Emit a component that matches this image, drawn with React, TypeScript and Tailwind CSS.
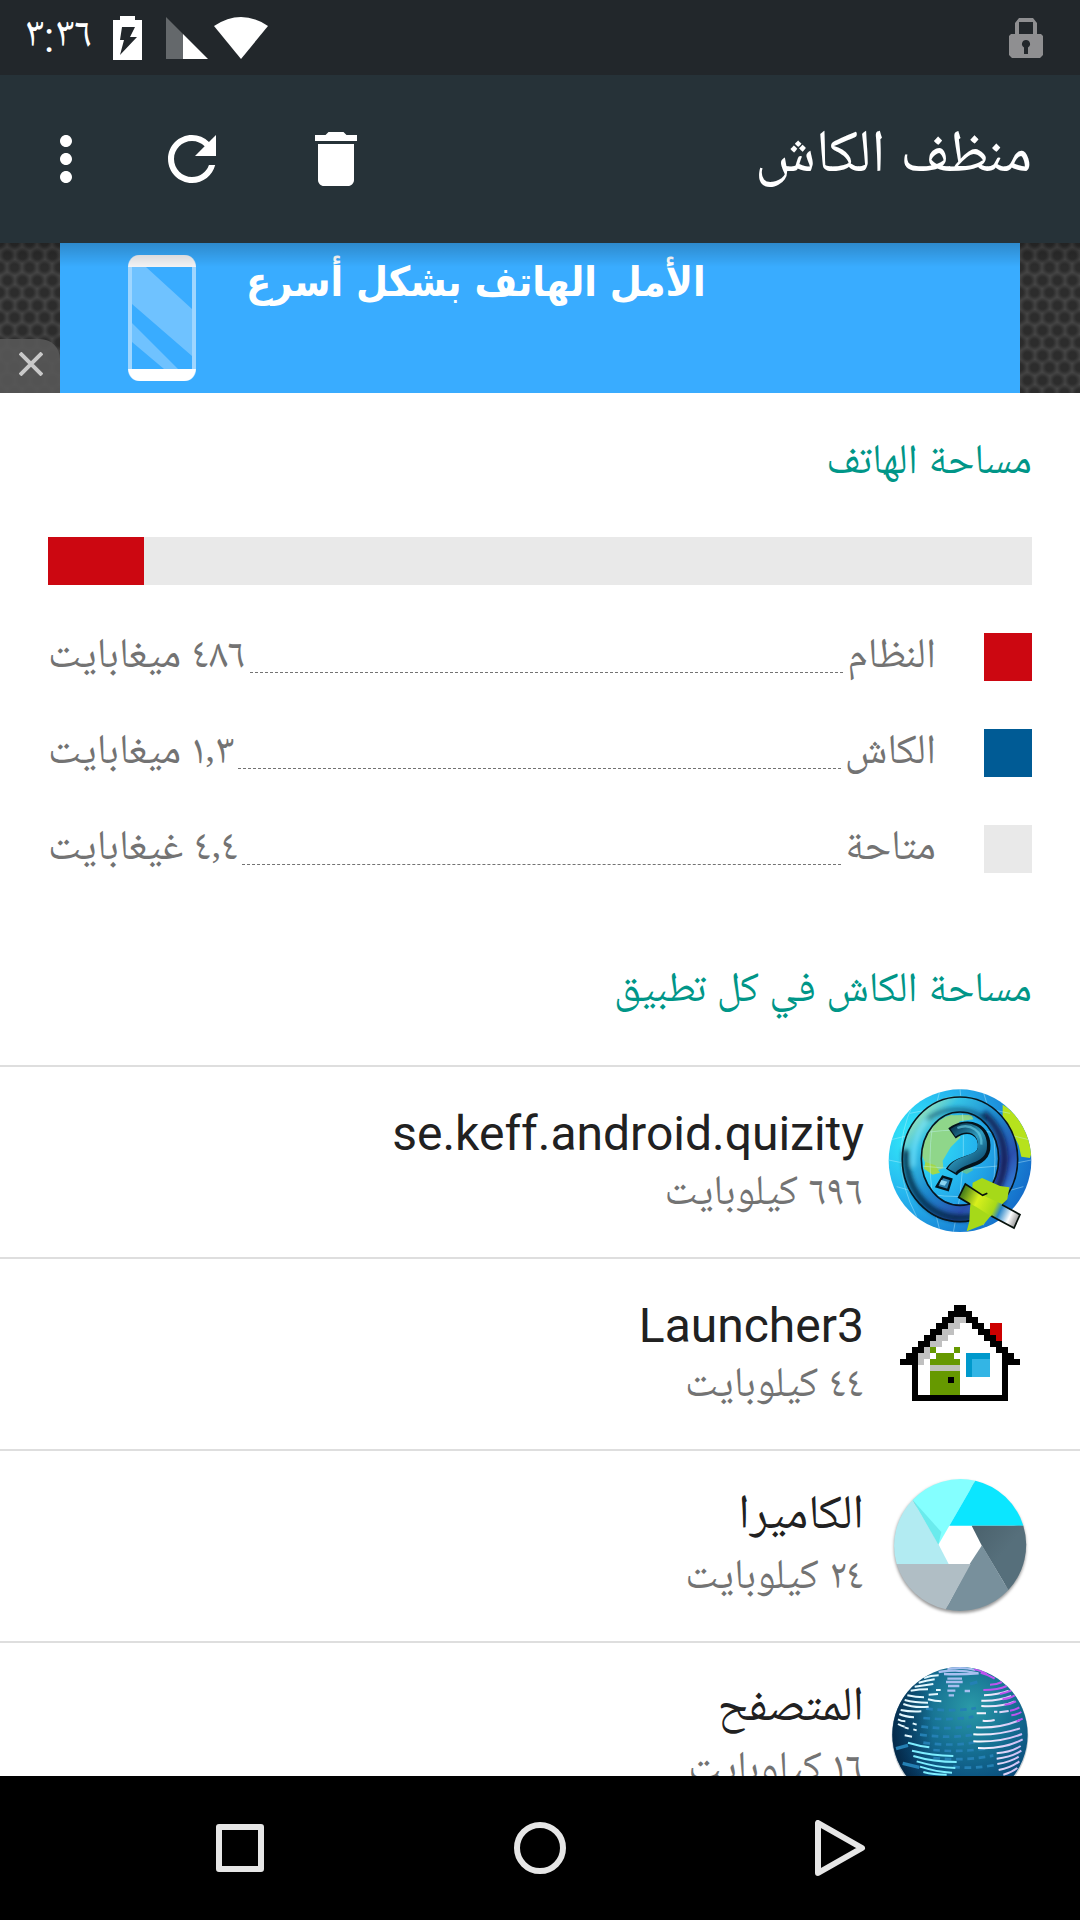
import type { ReactNode } from 'react';
import { MdDelete, MdMoreVert, MdRefresh } from 'react-icons/md';

const usage = [
  { label: 'النظام', value: '٤٨٦ ميغابايت', color: 'bg-[#cc0711]' },
  { label: 'الكاش', value: '١٫٣ ميغابايت', color: 'bg-[#005b95]' },
  { label: 'متاحة', value: '٤٫٤ غيغابايت', color: 'bg-[#e9e9e9]' },
];

const QuizityIcon = () => (
  <svg viewBox="54 57 432 432" className="size-full">
    <defs>
      <radialGradient id="qz-sea" cx="0.2" cy="0.35" r="0.9">
        <stop offset="0" stopColor="#35f0fb" />
        <stop offset="0.45" stopColor="#25b4ee" />
        <stop offset="1" stopColor="#1263c4" />
      </radialGradient>
      <linearGradient id="qz-ring" x1="0" y1="0" x2="1" y2="1">
        <stop offset="0" stopColor="#c4f0a8" />
        <stop offset="0.22" stopColor="#35c3e6" />
        <stop offset="0.5" stopColor="#1c86cc" />
        <stop offset="0.75" stopColor="#2a4fae" />
        <stop offset="1" stopColor="#3a9cf0" />
      </linearGradient>
      <linearGradient id="qz-mark" x1="0" y1="0" x2="0.6" y2="1">
        <stop offset="0" stopColor="#0b3b55" />
        <stop offset="0.5" stopColor="#2f9cc0" />
        <stop offset="1" stopColor="#0f4f74" />
      </linearGradient>
      <linearGradient id="qz-tail" gradientUnits="userSpaceOnUse" x1="266" y1="370" x2="445" y2="455">
        <stop offset="0" stopColor="#2d6a1c" />
        <stop offset="0.3" stopColor="#d8f01c" />
        <stop offset="0.58" stopColor="#a6d919" />
        <stop offset="0.68" stopColor="#2a86c8" />
        <stop offset="0.85" stopColor="#ffffff" />
        <stop offset="1" stopColor="#8a8a8a" />
      </linearGradient>
      <filter id="qz-soft" x="-20%" y="-20%" width="140%" height="140%">
        <feGaussianBlur stdDeviation="7" />
      </filter>
      <clipPath id="qz-clip"><circle cx="270" cy="272" r="214" /></clipPath>
    </defs>
    <circle cx="270" cy="272" r="214" fill="url(#qz-sea)" />
    <g clipPath="url(#qz-clip)">
      <path d="M398 104c40 20 78 82 88 140l-6 20-26-4-8-34-20-40-28-40z" fill="#b6e21c" />
      <path d="M150 160l50-30 50 6 54-2 6 14-40 6-20 26 22 22-30 30-24 40 2 22-24 10-30-24-24-56z" fill="#8fd68a" />
      <path d="M166 276l30 10 14 22-22 6-26-18z" fill="#a2d84a" />
      <path d="M262 300l36-14 12 14-20 12z" fill="#5cc0a0" />
      <g fill="none" stroke="#c5f4ff" strokeOpacity="0.4" strokeWidth="3">
        <path d="M60 210q210-60 420 0M56 270q210 50 428 0M80 350q190 60 380 0M120 130q150-40 300 0" />
        <path d="M210 60q-60 210 0 424M270 57q30 210-20 430M340 66q70 200 0 400M130 100q-80 170 10 340" />
      </g>
    </g>
    <ellipse cx="270" cy="267" rx="144" ry="163" fill="none" stroke="url(#qz-ring)" strokeWidth="54" />
    <g fill="none" filter="url(#qz-soft)">
      <path d="M108 240c-6 110 60 200 162 204 60 0 100-20 130-60" stroke="#04233c" strokeWidth="20" strokeOpacity="0.8" />
      <path d="M340 130c70 60 80 150 40 230" stroke="#0b1240" strokeWidth="22" strokeOpacity="0.75" />
      <path d="M170 150c40-34 120-50 180 0" stroke="#04233c" strokeWidth="12" strokeOpacity="0.5" />
      <path d="M130 290q-2-90 40-140" stroke="#7fe6ff" strokeWidth="12" strokeOpacity="0.7" />
    </g>
    <ellipse cx="270" cy="268" rx="173" ry="187" fill="none" stroke="#071620" strokeWidth="5" />
    <ellipse cx="270" cy="266" rx="116" ry="140" fill="none" stroke="#071620" strokeWidth="5" />
    <path d="M290 484l8-30 2-40 6-50 2-26 28-14 54 24 28 4-6 36-38 36-34 40z" fill="#a6d919" clipPath="url(#qz-clip)" />
    <path d="M246 190c50-36 102-10 96 46-6 44-76 32-98 70" fill="none" stroke="#04131c" strokeWidth="38" />
    <path d="M249 188c48-32 94-6 88 48-6 38-72 28-92 66" fill="none" stroke="url(#qz-mark)" strokeWidth="27" />
    <path d="M262 174c40-16 76 10 72 50" fill="none" stroke="#63c7df" strokeWidth="7" strokeOpacity="0.7" />
    <path d="M218 320l26 8-10 32-34-10z" fill="#2a7eae" stroke="#04131c" strokeWidth="7" />
    <path d="M214 330l18 5-8 12-16-4z" fill="#8bd3f0" />
    <path d="M286 342l52 34 58 26 54 30-18 42-74-38-40-26-52-28z" fill="url(#qz-tail)" />
    <path d="M364 438l68 36 18-40-54-30M300 402l-34-20 20-40 52 34 14-6" fill="none" stroke="#08120c" strokeWidth="5" />
  </svg>
);

// k black, g gray, s silver, r red, a green, d/l window
const housePixels = [
  '.........kk.........',
  '........kkkk........',
  '.......kkggkk.......',
  '......kkgg..kk.rr...',
  '.....kkgg....kkrr...',
  '....kkgg......kkr...',
  '...kkgg........kk...',
  '..kkga...a......kk..',
  '.kkgg.aaa..dddd..kk.',
  'kkkg.aaaaa.dlll..kkk',
  '..k..sssss.dlll..k..',
  '..k..aaaaa.dlll..k..',
  '..k..aaaka.......k..',
  '..k..aaaaa.......k..',
  '..k..aaaaa.......k..',
  '..kkkkkkkkkkkkkkkk..',
];

const pixelColors: Record<string, string> = {
  k: '#000000',
  g: '#c0c0c0',
  s: '#bfc3b8',
  r: '#cc0000',
  a: '#669900',
  d: '#0099cc',
  l: '#33b5e5',
};

const LauncherIcon = () => (
  <svg viewBox="54 3 432 432" className="size-full" shapeRendering="crispEdges">
    {housePixels.map((row, y) =>
      row.split('').map((cell, x) =>
        cell === '.' ? null : (
          <rect key={`${x}-${y}`} x={90 + x * 18} y={75 + y * 18} width="18" height="18" fill={pixelColors[cell]} />
        )
      )
    )}
  </svg>
);

const CameraIcon = () => (
  <svg viewBox="54 39 432 432" className="size-full">
    <defs>
      <linearGradient id="cam-slate" x1="0" y1="0" x2="1" y2="1">
        <stop offset="0" stopColor="#4a616c" />
        <stop offset="0.5" stopColor="#566f7b" />
      </linearGradient>
      <filter id="cam-shadow" x="-10%" y="-10%" width="120%" height="120%">
        <feGaussianBlur stdDeviation="5" />
      </filter>
    </defs>
    <circle cx="270" cy="261" r="188" fill="none" stroke="#000" strokeOpacity="0.4" strokeWidth="20" filter="url(#cam-shadow)" />
    <path d="M128 120A198 198 0 0 1 316 62L238 197 205 254z" fill="#84ffff" />
    <path d="M316 62A198 198 0 0 1 460 197H238z" fill="#0be6ff" />
    <path d="M460 197A198 198 0 0 1 415 390L336 258 305 197z" fill="url(#cam-slate)" />
    <path d="M415 390A198 198 0 0 1 227 448L299 312 336 256z" fill="#78909c" />
    <path d="M227 448A198 198 0 0 1 80 312H302z" fill="#b0bec5" />
    <path d="M80 312A198 198 0 0 1 128 120L205 252 236 312z" fill="#b2ebf2" />
    <path d="M128 120L214 216 205 254z" fill="#4fd8dc" fillOpacity="0.5" />
  </svg>
);

const BrowserIcon = () => (
  <svg viewBox="54 45 432 432" className="size-full">
    <defs>
      <radialGradient id="web-ball" cx="0.58" cy="0.3" r="0.72">
        <stop offset="0" stopColor="#2a9aa8" />
        <stop offset="0.45" stopColor="#156f92" />
        <stop offset="0.8" stopColor="#0a4d7c" />
        <stop offset="1" stopColor="#062a4c" />
      </radialGradient>
      <linearGradient id="web-left" x1="0" y1="0" x2="1" y2="0">
        <stop offset="0" stopColor="#03203a" stopOpacity="0.7" />
        <stop offset="0.3" stopColor="#03203a" stopOpacity="0" />
      </linearGradient>
      <linearGradient id="web-line" gradientUnits="userSpaceOnUse" x1="310" y1="0" x2="460" y2="0">
        <stop offset="0" stopColor="#ffffff" />
        <stop offset="1" stopColor="#c9b8f5" />
      </linearGradient>
      <clipPath id="web-clip"><circle cx="270" cy="254" r="203" /></clipPath>
    </defs>
    <circle cx="270" cy="258" r="205" fill="#9aa5ad" fillOpacity="0.5" />
    <circle cx="270" cy="254" r="203" fill="url(#web-ball)" />
    <circle cx="270" cy="254" r="203" fill="url(#web-left)" />
    <g clipPath="url(#web-clip)" fill="none">
      <g stroke="#2480b4" strokeWidth="8" strokeDasharray="20 14">
        <path d="M168 176q90 10 150-2M160 204q90 8 150-4M154 230q90 10 150-2M150 254q90 12 160 0M160 278q90 12 160-2M190 300q80 8 170-6M190 324q100 10 180-8M250 350q60 8 130-6" />
      </g>
      <path d="M78 296l36-10M98 340l50 12M300 102l22-6" stroke="#2480b4" strokeWidth="10" />
      <g stroke="#a8bff0" strokeWidth="7">
        <path d="M232 56q50-6 84 4M206 66q60-10 118 4M222 72q50 2 104-2" />
        <path d="M232 86h44M228 96h50M234 108h34M232 122h24M236 136h16M284 123h16" />
      </g>
      <g stroke="#e3f8ff" strokeWidth="6">
        <path d="M162 84q20-8 44-8M146 98q22-6 48-10M134 110q28-4 56-8M122 122q26-4 52-4M112 136q26 6 50 6M104 150q30 8 70 8M100 162q30 12 76 8M92 180q28 6 62 4M88 192q16 8 44 10M84 208q10 6 22 6M84 222q10 6 20 8" />
        <path d="M176 134l28-2M174 148q22 6 40 6M198 120h14M128 220l12 4M104 232l12 4M130 238l10 3M104 256l22 4" />
      </g>
      <g stroke="#7deeff" strokeWidth="6">
        <path d="M114 278q34 10 64 14M126 302q60 14 124 16M130 318q60 18 130 18M140 334q60 18 116 20M150 350q50 16 96 18M160 366q30 8 70 8" />
      </g>
      <g stroke="url(#web-line)" strokeWidth="6">
        <path d="M342 136q44-2 74-14M334 152q50 2 90-14M334 168q60 4 100-14M320 190h28M372 185h10M388 187l28-4M338 212q20 2 36-2M318 232q70 4 132-22M310 253q76 4 140-18M310 274q84 4 146-22M324 294q80 4 134-26M380 310q44-4 72-22M380 326q44-4 74-24M382 342q40-6 64-22M386 360q36-6 62-26M400 374q24-6 42-20" />
      </g>
      <g stroke="#bd55ef" strokeWidth="6">
        <path d="M312 58q24 4 38 14M332 68q24 6 42 18M360 104q20 0 36-8M340 120q46 0 70-12M390 132q20-4 34-10M398 148q24-4 36-12M404 164q20-2 34-10M420 182q16-2 28-10M424 196q16-2 30-10M440 214l18-8" />
      </g>
    </g>
  </svg>
);

const apps: { name: string; size: string; icon: ReactNode }[] = [
  { name: 'se.keff.android.quizity', size: '٦٩٦ كيلوبايت', icon: <QuizityIcon /> },
  { name: 'Launcher3', size: '٤٤ كيلوبايت', icon: <LauncherIcon /> },
  { name: 'الكاميرا', size: '٢٤ كيلوبايت', icon: <CameraIcon /> },
  { name: 'المتصفح', size: '١٦ كيلوبايت', icon: <BrowserIcon /> },
];

const StatusBar = () => (
  <div className="flex h-[75px] shrink-0 items-center justify-between bg-[#22272b] pr-9 pl-6">
    <svg viewBox="0 0 36 42" className="h-[42px] w-9" fill="#8f8f91">
      <path fillRule="evenodd" d="M7 17V6l4-5h14l4 5v11h4l2 2v19l-3 3H4l-3-3V19l2-2zM11 17h14V5H11zM18 23a4 4 0 0 0-2 7.500v6.500h4v-6.500A4 4 0 0 0 18 23z" />
    </svg>
    <div dir="ltr" className="flex items-center">
      <span className="text-[42px] leading-[48px] text-white">٣:٣٦</span>
      <svg viewBox="0 0 29 44" className="mr-6 ml-5 h-11 w-[29px]">
        <path d="M7 0h15v4h7v40H0V4h7z" fill="#fff" />
        <path d="M9 11h13l-5 10h7L7 39l4-15H7z" fill="#22272b" />
      </svg>
      <svg viewBox="0 0 42 42" className="mr-1.5 h-[42px] w-[42px]">
        <path d="M0 0l17 17v25H0z" fill="#64686b" />
        <path d="M17 17l25 25H17z" fill="#fff" />
      </svg>
      <svg viewBox="0 0 54 42" className="h-[42px] w-[54px]">
        <path d="M0 9Q27-9 54 9L27 42z" fill="#fff" />
      </svg>
    </div>
  </div>
);

const Toolbar = () => (
  <header className="flex h-[168px] shrink-0 items-center justify-between bg-[#263238] pr-12 text-white">
    <h1 className="text-[60px] leading-[72px]">منظف الكاش</h1>
    <div className="flex items-center pl-3">
      <button aria-label="حذف" className="flex size-36 items-center justify-center">
        <MdDelete className="size-[72px]" />
      </button>
      <button aria-label="تحديث" className="flex size-36 items-center justify-center">
        <MdRefresh className="size-[72px]" />
      </button>
      <button aria-label="المزيد" className="flex h-36 w-27 items-center justify-center">
        <MdMoreVert className="size-[72px]" />
      </button>
    </div>
  </header>
);

const AdBanner = () => (
  <div className="relative h-[150px] shrink-0 bg-[#444444] bg-[radial-gradient(circle,#2c2c2c_25%,transparent_55%),radial-gradient(circle,#2c2c2c_25%,transparent_55%)] bg-[size:15px_25px,15px_25px] bg-[position:0_0,7px_12px] px-15">
    <a href="#" dir="ltr" className="flex h-full items-start bg-[#39acff] pt-3 pl-17">
      <svg viewBox="0 0 68 126" className="h-[126px] w-[68px] shrink-0">
        <rect width="68" height="126" rx="11" fill="#9fd6ff" />
        <path d="M0 12Q2 0 12 0h44q10 0 12 12z" fill="#f3f3f5" />
        <path d="M0 114q2 12 12 12h44q10 0 12-12z" fill="#fff" />
        <path d="M4 12h60v102H4z" fill="#39acff" />
        <path d="M4 12h14l46 42v47L4 49zM4 68l46 46H36L4 87z" fill="#6fc2ff" />
      </svg>
      <span dir="rtl" className="ml-[50px] font-['DejaVu_Sans_Condensed','DejaVu_Sans',sans-serif] text-[41px] leading-[54px] font-bold text-white">
        الأمل الهاتف بشكل أسرع
      </span>
    </a>
    <div className="pointer-events-none absolute inset-x-0 top-0 h-6 bg-gradient-to-b from-black/20 to-transparent" />
    <button aria-label="إغلاق" className="absolute bottom-0 left-0 flex h-[54px] w-15 items-center justify-center rounded-tr-[20px] bg-[#585858]/90 pb-1 pl-0.5">
      <svg viewBox="0 0 24 24" className="size-6" stroke="#c9c9c9" strokeWidth="4">
        <path d="M1 1l22 22M23 1L1 23" />
      </svg>
    </button>
  </div>
);

const NavBar = () => (
  <nav className="flex h-36 shrink-0 bg-black px-[90px]">
    <button aria-label="رجوع" className="flex flex-1 items-center justify-center">
      <svg viewBox="0 0 56 56" className="size-14" fill="none" stroke="#e6e6e6" strokeWidth="6" strokeLinejoin="round">
        <path d="M6 3v50l44-25z" />
      </svg>
    </button>
    <button aria-label="الرئيسية" className="flex flex-1 items-center justify-center">
      <svg viewBox="0 0 56 56" className="size-14" fill="none" stroke="#e6e6e6" strokeWidth="6">
        <circle cx="28" cy="28" r="23" />
      </svg>
    </button>
    <button aria-label="التطبيقات الأخيرة" className="flex flex-1 items-center justify-center">
      <svg viewBox="0 0 56 56" className="size-14" fill="none" stroke="#e6e6e6" strokeWidth="6" strokeLinejoin="round">
        <rect x="7" y="7" width="42" height="42" />
      </svg>
    </button>
  </nav>
);

const App = () => {
  return (
    <div dir="rtl" lang="ar" className="flex h-screen flex-col overflow-hidden bg-white font-[Roboto,'Noto_Naskh_Arabic_UI','Noto_Naskh_Arabic','Noto_Sans_Arabic','DejaVu_Sans',sans-serif]">
      <StatusBar />
      <Toolbar />
      <AdBanner />

      <main className="min-h-0 flex-1 overflow-hidden">
        {/* Storage summary */}
        <section className="px-12">
          <h2 className="flex h-36 items-center text-[42px] leading-[48px] text-[#009688]">مساحة الهاتف</h2>
          <div className="flex h-12 justify-end bg-[#e9e9e9]">
            <div className="bg-[#cc0711]" style={{ width: `${(486 / 4980) * 100}%` }} />
          </div>
          <dl className="mt-12 flex flex-col gap-12">
            {usage.map((item) => (
              <div key={item.label} className="flex h-12 items-center text-[42px] leading-[48px] text-[#737373]">
                <div className={`ml-12 size-12 ${item.color}`} />
                <dt className="pt-1">{item.label}</dt>
                <div className="mx-1 mb-2 flex-1 self-end border-b border-dashed border-[#737373]" />
                <dd className="pt-1">{item.value}</dd>
              </div>
            ))}
          </dl>
        </section>

        {/* Per app cache */}
        <section className="mt-12">
          <h2 className="flex h-36 items-center px-12 text-[42px] leading-[48px] text-[#009688]">مساحة الكاش في كل تطبيق</h2>
          <ul>
            {apps.map((app) => (
              <li key={app.name} className="flex h-48 items-center gap-6 border-t-2 border-[#dedede] px-12 pb-0.5">
                <div className="size-36 shrink-0">{app.icon}</div>
                <div className="pt-0.5">
                  <p className="text-[48px] leading-[60px] text-[#212121]">{app.name}</p>
                  <p className="mt-2 text-[42px] leading-[48px] text-[#737373]">{app.size}</p>
                </div>
              </li>
            ))}
          </ul>
        </section>
      </main>

      <NavBar />
    </div>
  );
};

export default App;
